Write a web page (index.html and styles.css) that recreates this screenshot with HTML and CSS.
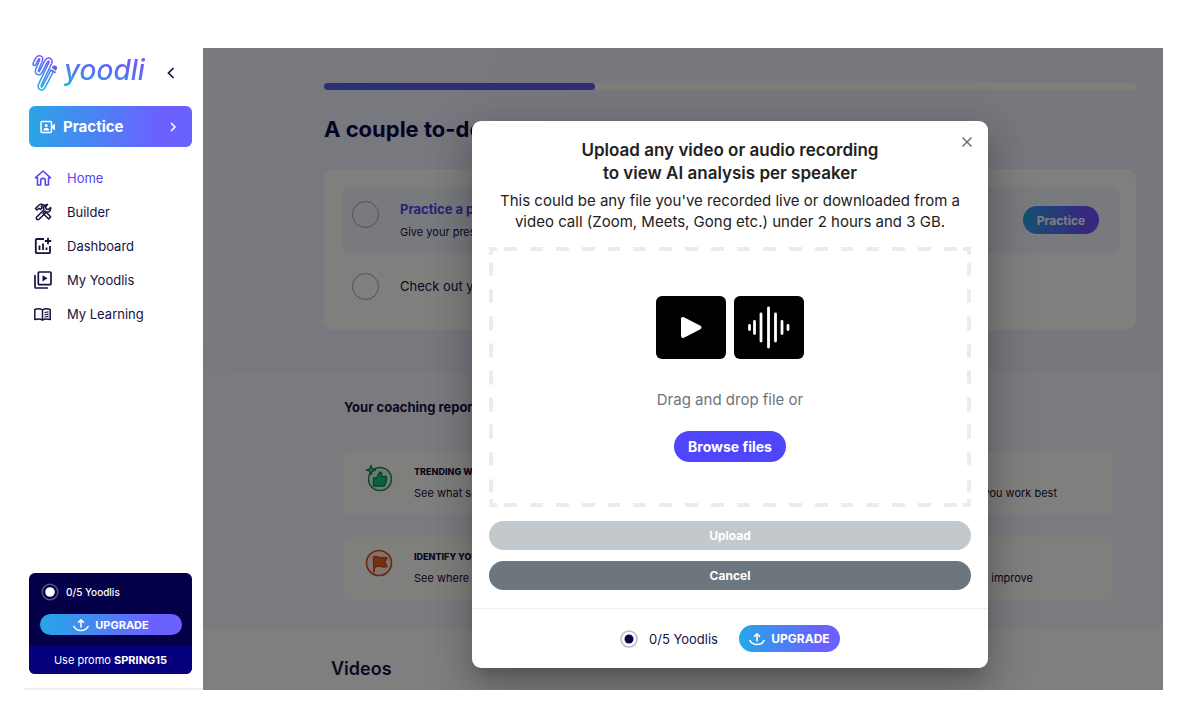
FILE: index.html
```html
<!DOCTYPE html>
<html lang="en">
<head>
    <meta charset="UTF-8">
    <meta name="viewport" content="width=device-width, initial-scale=1.0">
    <title>Yoodli</title>
    <link rel="stylesheet" href="styles.css">
</head>
<body>
    <div class="app">
        <aside class="sidebar">
            <div class="brand">
                <a class="logo" href="#">
                    <svg class="logo-mark" viewBox="0 0 26 38" fill="none" stroke-linecap="round" stroke-linejoin="round">
                        <defs>
                            <linearGradient id="brandGradient" gradientUnits="userSpaceOnUse" x1="8" y1="36" x2="16" y2="4">
                                <stop offset="0" stop-color="#1fb0e8"/>
                                <stop offset="1" stop-color="#6b5cf6"/>
                            </linearGradient>
                        </defs>
                        <!-- cable: coloured tube with a white core -->
                        <path d="M2.500 10 L4.800 5 C6.500 1.800 10.200 3.200 9 6.500 L5 16 C4 19.500 7.500 20.500 9 17.500 L14 7.500 C16 4 19.500 5.500 18.300 9 L8 30.500 C6.500 34.500 10.500 36 12 32.500 L19.500 18" stroke="url(#brandGradient)" stroke-width="4.400"/>
                        <path d="M2.500 10 L4.800 5 C6.500 1.800 10.200 3.200 9 6.500 L5 16 C4 19.500 7.500 20.500 9 17.500 L14 7.500 C16 4 19.500 5.500 18.300 9 L8 30.500 C6.500 34.500 10.500 36 12 32.500 L19.500 18" stroke="#fff" stroke-width="1.500"/>
                        <path d="M18.500 16 l4.500 2.300" stroke="url(#brandGradient)" stroke-width="1.800"/>
                        <path d="M20.500 13.500 c.8-2.500 4.500-1.500 4 1 l-1 1.500z" fill="#6b5cf6" stroke="#6b5cf6" stroke-width="1.200"/>
                    </svg>
                    <span class="logo-text">yoodli</span>
                </a>
                <button class="collapse" type="button" aria-label="Collapse menu">
                    <svg viewBox="0 0 10 14" fill="none" stroke="currentColor" stroke-width="1.7"><path d="M7.500 2 2.500 7l5 5"/></svg>
                </button>
            </div>

            <button class="practice-nav" type="button">
                <svg class="practice-icon" viewBox="0 0 16 14" fill="none" stroke="currentColor" stroke-width="1.5">
                    <rect x="1" y="1.500" width="10.500" height="11" rx="1"/>
                    <path d="M12 6l3-2.500v7L12 8z" fill="currentColor" stroke="none"/>
                    <circle cx="6.200" cy="5.500" r="1.500" fill="currentColor" stroke="none"/>
                    <path d="M3.300 10.500c0-3.600 5.800-3.600 5.800 0z" fill="currentColor" stroke="none"/>
                </svg>
                <span>Practice</span>
                <svg class="practice-arrow" viewBox="0 0 8 12" fill="none" stroke="currentColor" stroke-width="1.6"><path d="M2 2l4 4-4 4"/></svg>
            </button>

            <nav class="nav">
                <a class="nav-link active" href="#">
                    <svg viewBox="0 0 18 18" fill="none" stroke="currentColor" stroke-width="1.6" stroke-linejoin="round">
                        <path d="M1.300 8.800 9 2l7.700 6.800H14.500V16h-3.200v-4.500a2.300 2.300 0 0 0-4.600 0V16H3.500V8.800z"/>
                    </svg>
                    Home
                </a>
                <a class="nav-link" href="#">
                    <svg viewBox="0 0 18 18" fill="none" stroke="currentColor" stroke-width="1.5" stroke-linejoin="round">
                        <path d="M1.500 5.500 5 2c1.500-1 3-1 4.500-.2L7.300 3.500l.9 1.300L6.500 6.500 5 5.200 3 7z"/>
                        <path d="M9.500 9.500l1.500-1.500 5.700 5.700-2 2.300L9 10.500z"/>
                        <path d="M13.500 1.500l-2 2.200.6 2.300 2.400.5 2-2c.6 2.700-1 5-4 4.500L5 16.200c-1.500 1.300-3.500-.7-2.300-2.200L9.800 7c-.8-3 .9-5.800 3.700-5.500z"/>
                    </svg>
                    Builder
                </a>
                <a class="nav-link" href="#">
                    <svg viewBox="0 0 18 18" fill="none" stroke="currentColor" stroke-width="1.8">
                        <path d="M10 2H2.800a1 1 0 0 0-1 1v12.200a1 1 0 0 0 1 1H15a1 1 0 0 0 1-1V9"/>
                        <path d="M5.500 8.500V13M9 6.500V13M12.500 10.500V13M14 .8v6.400M10.800 4h6.400"/>
                    </svg>
                    Dashboard
                </a>
                <a class="nav-link" href="#">
                    <svg viewBox="0 0 18 18" fill="none" stroke="currentColor" stroke-width="1.7">
                        <rect x="4.300" y="1" width="12.700" height="12.700" rx="1"/>
                        <path d="M1 4v12a1 1 0 0 0 1 1h12"/>
                        <path d="M8.500 4.200v6.300l5-3.150z" fill="currentColor" stroke="none"/>
                    </svg>
                    My Yoodlis
                </a>
                <a class="nav-link" href="#">
                    <svg viewBox="0 0 18 18" fill="none" stroke="currentColor" stroke-width="1.5" stroke-linejoin="round">
                        <path d="M8.500 5C6.500 3.600 3.500 3.600.8 4.500v10c2.700-.8 5.700-.8 7.700.6 2-1.400 5-1.400 7.700-.6v-10C13.500 3.600 10.500 3.600 8.500 5zM8.500 5v10"/>
                        <path d="M10.500 7.500l4-.6M10.500 9.700l4-.6M10.500 12l4-.6" stroke-width="1.100"/>
                    </svg>
                    My Learning
                </a>
            </nav>

            <div class="plan">
                <div class="plan-body">
                    <div class="plan-usage">
                        <svg class="usage-dot" viewBox="0 0 18 18"><circle class="ring" cx="9" cy="9" r="7.800"/><circle class="dot" cx="9" cy="9" r="4.800"/></svg>
                        0/5 Yoodlis
                    </div>
                    <button class="upgrade" type="button">
                        <svg viewBox="0 0 16 14" fill="none" stroke="currentColor" stroke-width="1.6" stroke-linecap="round" stroke-linejoin="round"><path d="M8 9V2M5.500 4.300 8 1.800l2.500 2.500M1 8.500c2.500 5.300 11.500 5.300 14 0"/></svg>
                        UPGRADE
                    </button>
                </div>
                <p class="promo">Use promo <strong>SPRING15</strong></p>
            </div>
        </aside>

        <main class="main">
            <section class="hero">
                <div class="progress"><div class="progress-value"></div></div>
                <h1>A couple to-dos</h1>
                <div class="todo-card">
                    <div class="todo highlighted">
                        <input type="checkbox" id="todoPractice">
                        <label for="todoPractice">
                            <strong>Practice a pitch</strong>
                            <small>Give your pres</small>
                        </label>
                        <button class="practice" type="button">Practice</button>
                    </div>
                    <div class="todo">
                        <input type="checkbox" id="todoCheck">
                        <label for="todoCheck">Check out you</label>
                    </div>
                </div>
            </section>

            <section class="report">
                <h2>Your coaching report</h2>
                <article class="report-card">
                    <svg class="report-icon good" viewBox="0 0 28 28" fill="none" stroke="#0a8a55" stroke-width="1.4" stroke-linejoin="round">
                        <circle cx="15" cy="15" r="11.500" fill="#d9f5e6"/>
                        <path d="M8.500 14h3l3.200-6c2.300 0 2.300 2 1.300 4.500h4.500c1.500 0 1.500 1.500 1 2.500l-1.300 5.500c-.3 1-1 1.500-2 1.500H8.500z" fill="#18c478"/>
                        <path d="M6 1.500l1.200 3.300L10.500 6 7.200 7.200 6 10.500 4.800 7.200 1.500 6l3.300-1.200z" fill="#b6d94c"/>
                    </svg>
                    <div class="report-text">
                        <h3>TRENDING WELL</h3>
                        <p><span>See what ski</span><span>you work best</span></p>
                    </div>
                </article>
                <article class="report-card second">
                    <svg class="report-icon" viewBox="0 0 28 28" fill="none" stroke="#d2501a" stroke-width="1.6" stroke-linejoin="round">
                        <circle cx="14" cy="14" r="12.500" fill="#fde6dc"/>
                        <path d="M9 23 8.500 8c3-2 5 1.500 8 .8 2-.3 3-.8 5.500.2l-2.500 4L22 17.500c-3.500 1.500-6-1-9-.5-1.500.3-2.500.5-3.500 1z" fill="#f0601e"/>
                    </svg>
                    <div class="report-text">
                        <h3>IDENTIFY YOUR</h3>
                        <p><span>See where</span><span>improve</span></p>
                    </div>
                </article>
            </section>

            <section class="videos">
                <h2>Videos</h2>
            </section>

            <div class="overlay">
                <div class="modal" role="dialog" aria-labelledby="modalTitle">
                    <button class="close" type="button" aria-label="Close">
                        <svg viewBox="0 0 12 12" fill="none" stroke="currentColor" stroke-width="1.4"><path d="M1.500 1.500l9 9M10.500 1.500l-9 9"/></svg>
                    </button>
                    <div class="modal-body">
                        <h2 id="modalTitle">Upload any video or audio recording<br>to view AI analysis per speaker</h2>
                        <p class="modal-text">This could be any file you've recorded live or downloaded from a<br>video call (Zoom, Meets, Gong etc.) under 2 hours and 3 GB.</p>
                        <div class="dropzone">
                            <div class="file-types">
                                <svg viewBox="0 0 70 63"><rect width="70" height="63" rx="6"/><path d="M27 23 v17 L43.500 31.500z" fill="#fff" stroke="#fff" stroke-width="4" stroke-linejoin="round"/></svg>
                                <svg viewBox="0 0 70 63"><rect width="70" height="63" rx="6"/><path d="M15.500 29.500v4M20.500 25.500v12M27 18v27M34.500 12v39M41.500 18v27M48 25.500v12M54 29.500v4" stroke="#fff" stroke-width="2.800" stroke-linecap="round"/></svg>
                            </div>
                            <p>Drag and drop file or</p>
                            <button class="browse" type="button">Browse files</button>
                        </div>
                        <button class="wide-button upload" type="button" disabled>Upload</button>
                        <button class="wide-button cancel" type="button">Cancel</button>
                    </div>
                    <div class="modal-footer">
                        <svg class="usage-dot" viewBox="0 0 18 18"><circle class="ring" cx="9" cy="9" r="8"/><circle class="dot" cx="9" cy="9" r="4.500"/></svg>
                        <span>0/5 Yoodlis</span>
                        <button class="upgrade" type="button">
                            <svg viewBox="0 0 16 14" fill="none" stroke="currentColor" stroke-width="1.6" stroke-linecap="round" stroke-linejoin="round"><path d="M8 9V2M5.500 4.300 8 1.800l2.500 2.500M1 8.500c2.500 5.300 11.500 5.300 14 0"/></svg>
                            UPGRADE
                        </button>
                    </div>
                </div>
            </div>
        </main>
    </div>
</body>
</html>
```
FILE: styles.css
```css
* {
    box-sizing: border-box;
}
body {
    margin: 0;
    padding: 48px 37px 33px 24px;
    background: #fff;
    color: #16123f;
    font-family: Inter, "Open Sans", sans-serif;
    font-size: 13px;
}
h1, h2, h3, p {
    margin: 0;
}
button {
    font-family: inherit;
    border: none;
    padding: 0;
    color: white;
    font-weight: bold;
    cursor: pointer;
}
svg {
    display: block;
    flex: none;
}
.app {
    display: flex;
    min-height: calc(100vh - 81px);
}

/* Sidebar */
.sidebar {
    width: 179px;
    flex: none;
    display: flex;
    flex-direction: column;
    padding: 6px 11px 14px 5px;
    border-bottom: 2px solid #f0f0f2;
}
.brand {
    display: flex;
    align-items: center;
    justify-content: space-between;
    height: 38px;
    padding: 0 16px 0 3px;
}
.logo {
    display: flex;
    align-items: center;
    gap: 6px;
    text-decoration: none;
}
.logo-mark {
    width: 26px;
    height: 38px;
}
.logo-text {
    padding: 0 4px 6px 0;
    background: linear-gradient(10deg, #1fb0e8 10%, #6b5cf6 70%);
    -webkit-background-clip: text;
    background-clip: text;
    color: transparent;
    font-size: 28px;
    line-height: 34px;
    font-style: italic;
    font-weight: 500;
}
.collapse {
    background: none;
    color: #16123f;
}
.collapse svg {
    width: 10px;
    height: 14px;
}
.practice-nav {
    display: flex;
    align-items: center;
    gap: 7px;
    height: 41px;
    margin-top: 14px;
    padding: 0 15px 0 11px;
    border-radius: 6px;
    background: linear-gradient(90deg, #2aa5e6, #6b61ff 80%);
    font-size: 15px;
}
.practice-icon {
    width: 16px;
    height: 14px;
}
.practice-arrow {
    width: 8px;
    height: 12px;
    margin-left: auto;
}
.nav {
    margin-top: 14px;
}
.nav-link {
    display: flex;
    align-items: center;
    gap: 15px;
    height: 34px;
    padding-left: 5px;
    color: #16123f;
    font-size: 13px;
    text-decoration: none;
}
.nav-link svg {
    width: 18px;
    height: 18px;
}
.nav-link.active {
    color: #5046f5;
}
.plan {
    margin-top: auto;
    overflow: hidden;
    border-radius: 6px;
    background: #040048;
    color: white;
}
.plan-body {
    padding: 9px 10px 11px 11px;
}
.plan-usage {
    display: flex;
    align-items: center;
    gap: 7px;
    height: 20px;
    padding-left: 1px;
    font-size: 10px;
    font-weight: 500;
}
.usage-dot {
    width: 18px;
    height: 18px;
}
.usage-dot .ring {
    fill: none;
    stroke: #b9b6cf;
    stroke-width: 1.5;
}
.usage-dot .dot {
    fill: #0b0645;
}
.plan .ring {
    stroke: #565180;
}
.plan .dot {
    fill: white;
}
.upgrade {
    display: flex;
    align-items: center;
    justify-content: center;
    gap: 6px;
    border-radius: 14px;
    background: linear-gradient(90deg, #24a8e6, #6b61ff 80%);
    font-size: 12px;
}
.upgrade svg {
    width: 16px;
    height: 14px;
}
.plan .upgrade {
    width: 100%;
    height: 21px;
    margin-top: 12px;
    font-size: 11px;
}
.promo {
    background: #06007c;
    font-size: 11px;
    line-height: 28px;
    text-align: center;
}

/* Page content */
.main {
    position: relative;
    display: flex;
    flex: 1;
    flex-direction: column;
    overflow: hidden;
}
.hero {
    padding: 35px 27px 42px 121px;
    background: linear-gradient(100deg, #f1f4fd, #eeeefd 60%);
}
.progress {
    height: 7px;
    border-radius: 4px;
    background: #fffef5;
}
.progress-value {
    width: 271px;
    height: 7px;
    border-radius: 4px;
    background: linear-gradient(90deg, #5562e8, #655cf0);
}
.hero h1 {
    margin: 24px 0 25px;
    color: #0b0645;
    font-size: 22px;
    line-height: 30px;
}
.todo-card {
    padding: 18px 16px 11px 19px;
    border-radius: 10px;
    background: #fffffc;
}
.todo {
    display: flex;
    align-items: center;
    gap: 21px;
    height: 66px;
    padding: 0 21px 0 9px;
    border-radius: 8px;
}
.todo.highlighted {
    background: #f1f5fd;
}
.todo input {
    appearance: none;
    width: 27px;
    height: 27px;
    margin: 0;
    border: 1px solid #a0a0ac;
    border-radius: 50%;
}
.todo.highlighted input {
    margin-bottom: 12px;
}
.todo label {
    font-size: 13px;
}
.todo label strong {
    display: block;
    color: #5046f5;
    font-size: 13px;
    line-height: 24px;
}
.todo label small {
    display: block;
    font-size: 11px;
    line-height: 22px;
}
.practice {
    width: 76px;
    height: 28px;
    margin-left: auto;
    border-radius: 14px;
    background: linear-gradient(90deg, #2aa5e6, #6b50ff 80%);
    font-size: 12px;
}
.report {
    padding: 25px 50px 29px 141px;
    background: #f6f5fe;
}
.report h2 {
    font-size: 13px;
    line-height: 20px;
}
.report-card {
    display: flex;
    gap: 21px;
    height: 63px;
    margin-top: 35px;
    padding: 10px 56px 0 21px;
    border-radius: 4px;
    background: #fffffc;
}
.report-card.second {
    margin-top: 22px;
    padding-right: 80px;
}
.report-icon {
    width: 28px;
    height: 28px;
    margin-top: 2px;
}
.report-text {
    flex: 1;
}
.report-text h3 {
    font-size: 9px;
    line-height: 20px;
    font-weight: 800;
}
.report-text p {
    display: flex;
    justify-content: space-between;
    font-size: 11px;
    line-height: 22px;
}
.videos {
    flex: 1;
    padding: 26px 128px 0;
    background: #fff;
}
.videos h2 {
    font-size: 18px;
    line-height: 28px;
    font-weight: 600;
}

/* Upload modal */
.overlay {
    position: absolute;
    inset: 0;
    display: flex;
    justify-content: center;
    align-items: flex-start;
    padding: 73px 0 0 94px;
    background: rgba(0, 0, 0, 0.5);
}
.modal {
    position: relative;
    width: 516px;
    border-radius: 9px;
    background: white;
    box-shadow: 0 11px 15px -7px rgba(0, 0, 0, 0.2), 0 24px 38px 3px rgba(0, 0, 0, 0.14), 0 9px 46px 8px rgba(0, 0, 0, 0.12);
}
.close {
    position: absolute;
    top: 15px;
    right: 15px;
    background: none;
    color: #666;
}
.close svg {
    width: 12px;
    height: 12px;
}
.modal-body {
    padding: 18px 17px;
    color: #222;
    text-align: center;
}
.modal h2 {
    font-size: 17px;
    line-height: 23px;
    font-weight: 600;
}
.modal-text {
    margin: 5px 0 15px;
    font-size: 15px;
    line-height: 21px;
}
.dropzone {
    padding: 41px 0 37px;
    border: 8px solid transparent;
    /* L-shaped corners with one dash between them, tiled along each side */
    border-image: url("data:image/svg+xml,%3Csvg xmlns='http://www.w3.org/2000/svg' width='42' height='42'%3E%3Cpath fill='%23ebebf0' d='M0 0h8v4H4v4H0zM34 0h8v8h-4V4h-4zM0 34h4v4h4v4H0zM38 34h4v8h-8v-4h4zM15 0h13v4H15zM15 38h13v4H15zM0 15h4v13H0zM38 15h4v13h-4z'/%3E%3C/svg%3E") 8 round;
}
.file-types {
    display: flex;
    justify-content: center;
    gap: 8px;
}
.file-types svg {
    width: 70px;
    height: 63px;
}
.dropzone p {
    margin: 30px 0 21px;
    color: #6c757d;
    font-size: 15px;
    line-height: 21px;
}
.browse {
    width: 112px;
    height: 31px;
    border-radius: 16px;
    background: #4f46fb;
    font-size: 14px;
}
.wide-button {
    display: block;
    width: 100%;
    height: 29px;
    margin-top: 11px;
    border-radius: 15px;
    font-size: 12px;
}
.upload {
    margin-top: 14px;
    background: #c3c8cc;
}
.cancel {
    background: #6c767e;
}
.modal-footer {
    display: flex;
    align-items: center;
    justify-content: center;
    height: 60px;
    border-top: 1px solid #f0f0f2;
    font-size: 13px;
}
.modal-footer span {
    margin: 0 21px 0 11px;
}
.modal-footer .upgrade {
    width: 101px;
    height: 27px;
}
```
